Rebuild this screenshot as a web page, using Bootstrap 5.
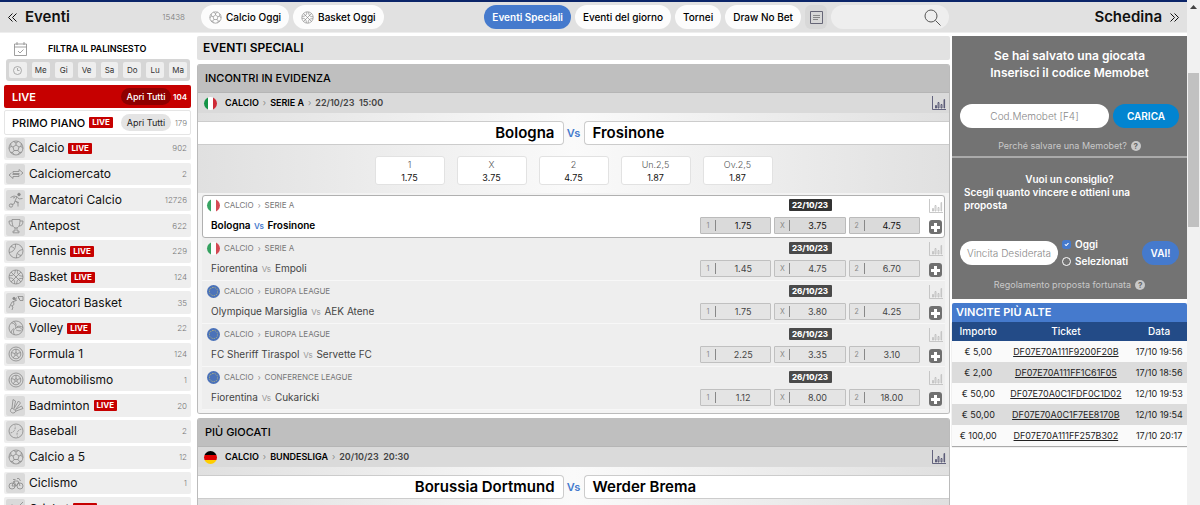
<!DOCTYPE html>
<html lang="it">
<head>
<meta charset="utf-8">
<meta name="viewport" content="width=device-width, initial-scale=1">
<title>Eventi Speciali</title>
<link href="https://cdn.jsdelivr.net/npm/bootstrap@5.3.0/dist/css/bootstrap.min.css" rel="stylesheet">
<style>
:root{--blue:#457acd;--red:#c60000;--side:197px;--slip:236px}
body{font-family:Inter,"Open Sans",sans-serif;font-size:11px;line-height:16px;color:#111;background:#fff}
a{color:inherit;text-decoration:none}
button{font:inherit;color:inherit}
svg{flex:none;fill:none;display:block}
svg:not([stroke]){stroke:currentColor}
.app{height:100vh;overflow:hidden}
.topbar{height:33px;flex:none;background:#e1e1e1;border-top:2px solid #0b2569;border-bottom:1px solid #eee}
.side-col{width:var(--side);flex:none}
.slip-col{width:var(--slip);flex:none}
.bigword{font-size:15px;font-weight:600;line-height:24px}
.chev{width:9px;height:9px;stroke-width:1}
.count{color:#777;font-size:8px;font-weight:300}
.pill{border:0;border-radius:12px;background:#fcfcfc;height:24px;padding:0 8px;font-size:10px;font-weight:500;color:#000;white-space:nowrap}
.pill.on{background:var(--blue);color:#fff;font-weight:600}
.pill svg{width:13px;height:13px;color:#888;stroke-width:.8}
.newsbtn{width:22px;height:24px;border:0;border-radius:6px;background:#d8d8d8;padding:0}
.search{width:118px;height:24px;border-radius:12px;background:#eee;margin-right:2px}
.search input{border:0;background:none;min-width:0;width:80px;outline:0}
.filter{padding:8px 0 2px 10px;gap:21px}
.filter-title{font-size:9px;font-weight:600;color:#000}
.days{background:#d6d6d6;border-radius:3px;padding:3px;gap:5px;margin:0 1px 0 2px}
.days button{flex:1 1 0;height:16px;border:0;border-radius:2px;background:#eee;padding:0;font-size:8px;line-height:16px;color:#333}
.bar{height:23px;border-radius:2px;padding:0 4px 0 8px;font-size:11px;font-weight:600}
.bar.live{background:var(--red);color:#fff;margin-top:4px}
.bar.first{border:1px solid #e5e5e5;color:#000;height:25px;padding:0 3px 0 7px;font-weight:500;margin-top:2px}
.bar .open{border:0;border-radius:9px;height:17px;width:50px;background:#e4e4e4;font-size:9px;font-weight:400;padding:0;line-height:17px;color:#222}
.bar.live .open{background:#8f0000;color:#fff;font-weight:500}
.bar .num{width:16px;text-align:right;font-size:8px}
.livetag{background:var(--red);color:#fff;font-size:8px;font-weight:700;line-height:11px;padding:0 3px;border-radius:1px}
.sports{display:grid;grid-auto-rows:1fr;gap:3px;min-height:383px;margin:2px 0 0;padding:0;list-style:none}
.sports a{background:#eee;border-radius:2px;height:100%;padding:0 4px 0 2px;font-size:12px;font-weight:400;color:#111}
.sports .ico{width:19px;height:20px;background:#dadada;border-radius:2px;color:#888}
.sports .ico svg{width:16px;height:16px;stroke-width:.8}
.main-col{min-width:0;padding:3px 1px 0 0}
.page-title{background:#e2e2e2;border-radius:2px;height:24px;padding:0 6px;font-size:12px;font-weight:600;line-height:24px;color:#000}
.panel{border:1px solid #bbb;border-top:0;border-radius:3px;overflow:hidden;background:linear-gradient(90deg,#e0e0e0,#fafafa 50%,#e0e0e0)}
.panel h2{margin:0 -1px;background:#bfbfbf;height:29px;line-height:29px;padding:0 8px;font-size:11px;font-weight:500;color:#000;border-bottom:1px solid #b5b5b5}
.crumb{height:20px;background:#dadada;padding:0 3px 0 6px;font-size:9px;font-weight:600;color:#000}
.crumb .when{color:#444}
.crumb i,.mini i{font-style:normal;font-weight:300;color:#777}
.flag{width:13px;height:13px;border-radius:50%;flex:none}
.it{background:linear-gradient(90deg,#149447 33%,#fff 33% 67%,#ce2b37 67%)}
.de{background:linear-gradient(#000 33%,#e00000 33% 67%,#ffce00 67%)}
.eu{background:#2f5db0}
.eu::after{content:"";display:block;width:9px;height:9px;margin:2px;border:1px dotted #a9a96b;border-radius:50%}
.versus{display:grid;grid-template-columns:1fr 20px 1fr;margin-top:8px;font-size:15px;font-weight:600;line-height:22px;color:#000}
.versus>span{background:#fff;border:1px solid #ccc;padding:0 8px}
.versus .home{text-align:right;border-left:0;border-radius:0 4px 4px 0}
.versus .away{border-right:0;border-radius:4px 0 0 4px}
.versus b{text-align:center;color:var(--blue);font-size:11px;font-weight:600;line-height:24px}
.quotes{gap:12px;padding:11px 0 8px}
.quotes button{width:70px;height:29px;border:1px solid #e2e2e2;border-radius:3px;background:#fff;font-size:9px;line-height:13px;padding:0;color:#111}
.quotes small{display:block;color:#555;font-size:9px;font-weight:300}
.matches{background:#eeeeee;border:4px solid #f3f3f3;border-top-width:2px;border-bottom-width:3px;margin:0}
.match{height:43px;padding:3px 2px 3px 5px;border-bottom:1px solid #f7f7f7;color:#444}
.match.on{background:#fff;border:1px solid #b0b0b0;border-radius:3px;padding:2px 1px 3px 4px;color:#000}
.mini{font-size:8px;color:#777;line-height:15px}
.match .flag{opacity:.85}
.teams{font-size:10px;line-height:16px;padding-left:4px}
.on .teams{font-weight:600}
.teams span{font-size:8px;color:#999;margin:0 1px}
.on .teams span{color:var(--blue)}
.odds{width:220px;gap:3px}
.odds button{flex:1 1 0;height:17px;border:1px solid #c0c0c0;border-radius:1px;background:#e4e4e4;padding:0;font-size:9px;line-height:15px;color:#444}
.on .odds button{background:#dadada;color:#111;border-color:#bbb}
.odds small{width:15px;border-right:1px solid #888;font-size:7px;line-height:11px;color:#888;text-align:center}
.dateb{background:#4a4a4a;color:#fff;font-size:8px;font-weight:800;line-height:12px;width:43px;text-align:center;border-radius:1px;margin-top:1px}
.on .dateb{background:#333}
.plus{width:13px;height:14px;border:0;border-radius:3px;background:#707070;padding:0}
.tools{width:15px;padding-top:1px}
.chart{width:15px;height:15px;stroke-width:.8}
.slip-col.body-col{padding:3px 0 0 1px}
.slipbox{background:#737373;color:#fff}
.memo{height:122px;padding:11px 8px 0;border-bottom:2px solid #aaa}
.memo p{font-size:12px;font-weight:600;line-height:17px;margin-bottom:23px}
.memo .hint{margin-top:10px}
.slipbox input[type=text]{border:0;border-radius:12px;height:24px;background:#fff;min-width:0;text-align:center;font-size:10px;font-weight:300;padding:0 4px;outline:0;color:#444}
.slipbox input::placeholder{color:#888}
.go{border:0;border-radius:12px;height:24px;background:#0284d0;color:#fff;font-weight:600;font-size:10px;padding:0;width:66px;flex:none}
.go.vai{background:var(--blue);width:37px}
.hint{color:#c9c9c9;font-size:9px;font-weight:400}
.hint b{width:10px;height:10px;border-radius:50%;background:#c9c9c9;color:#666;font-size:8px;line-height:10px;text-align:center}
.tip{height:141px;padding:15px 8px 0;font-size:10px;font-weight:600;line-height:13px}
.tip .wish{width:98px;flex:none}
.tip .form-check-input{width:9px;height:9px;margin:0;background-color:transparent;border-color:#fff;flex:none}
.tip .form-check-input:checked{background-color:var(--blue);border-color:var(--blue)}
.tip label{line-height:17px}
.wins{width:100%;font-size:9px;text-align:center;color:#222;box-shadow:0 1px 1px #aaa}
.wins caption{caption-side:top;background:var(--blue);color:#fff;font-size:11px;font-weight:600;line-height:19px;padding:0 4px;border-radius:2px 2px 0 0}
.wins th{background:#234b87;color:#fff;font-size:10px;font-weight:500;line-height:19px;padding:0}
.wins td{line-height:21px;padding:0;background:#fafafa}
.wins td:first-child,.wins th:first-child{padding-left:4px}
.wins tr:nth-child(even) td{background:#dcdcdc}
.wins a{text-decoration:underline}
.track{width:13px;background:#f1f1f1;flex:none;padding-top:5px;color:#444}
.thumb{width:11px;height:154px;background:#c1c1c1;margin-top:64px}
</style>
</head>
<body>
<svg width="0" height="0" class="position-absolute" aria-hidden="true" stroke="inherit">
<symbol id="ball" viewBox="0 0 16 16"><circle cx="8" cy="8" r="7"/><path d="M8 5l3 2-1 3.500H6L5 7zM8 5V3M11 7l2-.8M10 10.500l1.500 2M6 10.500l-1.500 2M5 7l-2-.8M5.500 1.500L8 3l2.500-1.500M1.200 8.500L3 6.200 2.600 3.600M14.800 8.500L13 6.200l.4-2.600M2.500 12.300l2 .2 1.500 2M13.500 12.300l-2 .2-1.500 2"/></symbol>
<symbol id="basket" viewBox="0 0 16 16"><circle cx="8" cy="8" r="7"/><path d="M3 3l10 10M13 3L3 13M1.300 6.500c4 .5 6-1.500 6-5.500M14.700 9.500c-4-.5-6 1.500-6 5.500M9.500 1.200c-.5 4 1.500 6 5.500 6M6.500 14.800c.5-4-1.500-6-5.500-6"/></symbol>
<symbol id="arrows" viewBox="0 0 16 16"><path d="M5 5.500h6V3.500l4 3.500-2.500 2M11 10.500H5v2L1 9l2.500-2M5 5.500L5 7.500h6.500M11 10.500v-2H4.500"/></symbol>
<symbol id="player" viewBox="0 0 16 16"><circle cx="11" cy="2.500" r="1.300" fill="currentColor"/><path d="M2.500 5.500L6 4l3 .7L7 9l3 2v3.500M9 4.700l2 2.300 3.500-.5M7 9l-1 3-2.500.5M8 9.500l3 1M5 6l2-.5"/><circle cx="3" cy="13.500" r="1.700"/></symbol>
<symbol id="cup" viewBox="0 0 16 16"><path d="M4 1.500h8c0 5-1 8.500-4 8.500S4 6.500 4 1.500zM4 3H1c0 3.500 1.500 5 4 5M12 3h3c0 3.500-1.500 5-4 5M7 10v3H5v1.800h6V13H9v-3"/></symbol>
<symbol id="tennis" viewBox="0 0 16 16"><circle cx="8" cy="8" r="7"/><path d="M1.300 9.500C5 9 8 6 7.500 1M14.700 6.500C11 7 8 10 8.500 15M3 3.500c1.500.3 2.500 1 3.500 2M13 12.500c-1.500-.3-2.500-1-3.500-2"/></symbol>
<symbol id="dunk" viewBox="0 0 16 16"><circle cx="6" cy="3.500" r="1.200" fill="currentColor"/><path d="M10 1.500h5v4h-3zM10 1.500l1.500 3M8.500 2.500L7 6l-3 1-1.500 3L5 12l-1 3M2.500 10L1 13M5.500 6.500L6 9.500 4 11M7 6l2-1"/></symbol>
<symbol id="volley" viewBox="0 0 16 16"><circle cx="8" cy="8" r="7"/><path d="M8 8C8 5 6 3 3.500 2.800M8 8c2.500-1.500 5-.5 6.500 2M8 8c-3 1.500-3 4.500-1.500 6.800M8.300 5.500C8 3.500 7 2 5.500 1.400M9 6.700c2-1 4-.5 6 .8M6 8.500C3.500 10 3 11.500 3.200 13M8.200 10c2 1 3.500 1 5.200.6"/></symbol>
<symbol id="wheel" viewBox="0 0 16 16"><circle cx="8" cy="8" r="7"/><circle cx="8" cy="8" r="4.800"/><circle cx="8" cy="8" r="1.300"/><path d="M8 3.200v3.500M3.500 6.500l3.200 1M12.500 6.500l-3.200 1M5.200 11.900l2-2.800M10.800 11.900l-2-2.800"/></symbol>
<symbol id="shuttle" viewBox="0 0 16 16"><path d="M4 10L5 1.500 7.500 3 6 10.500M6 10.500L10.500 3l2 2-5 6.500M7.500 11.500l6-3.500 1.500 2.500-7 2.500M4 10l4 3c-1 2-3 2.500-4.500 1.500S2 11.500 4 10z"/></symbol>
<symbol id="baseb" viewBox="0 0 16 16"><circle cx="8" cy="8" r="7"/><path d="M2.500 10C6 9.500 8 6 7 2.500M13.500 6C10 6.500 8 10 9.500 13.500" stroke-dasharray="2 1"/></symbol>
<symbol id="bike" viewBox="0 0 16 16"><circle cx="4" cy="11" r="3"/><circle cx="12" cy="11" r="3"/><path d="M4 11l2-5h4l2 5M6 6l2 5h-4M8 11l3-4M5 4.500h2.500M9 3.500h2L12.500 6"/></symbol>
<symbol id="cricket" viewBox="0 0 16 16"><path d="M2 13L11 4l2 2-9 8zM11.500 4.500L15 1"/><circle cx="4" cy="6" r="2"/></symbol>
<symbol id="bars" viewBox="0 0 15 15"><path d="M1.500 0v13.500H15"/><path d="M4.500 12V9.500h1V12zM7 12V6.500h1V12zM10 12V8.500h1V12zM13 12V3.500h.6V12z"/></symbol>
</svg>

<div class="app d-flex">
<div class="flex-grow-1 d-flex flex-column" style="min-width:0">
<header class="topbar d-flex align-items-center">
  <div class="side-col d-flex align-items-center ps-2">
    <svg class="chev" viewBox="0 0 9 9"><path d="M4.500.5l-4 4 4 4M8.500.5l-4 4 4 4"/></svg>
    <span class="bigword ms-2">Eventi</span><span class="count ms-auto me-2 pe-1">15438</span>
  </div>
  <nav class="flex-grow-1 d-flex align-items-center gap-1 ps-1">
    <button class="pill d-flex align-items-center gap-1"><svg><use href="#ball"/></svg>Calcio Oggi</button>
    <button class="pill d-flex align-items-center gap-1"><svg><use href="#basket"/></svg>Basket Oggi</button>
    <button class="pill on ms-auto">Eventi Speciali</button>
    <button class="pill">Eventi del giorno</button>
    <button class="pill">Tornei</button>
    <button class="pill">Draw No Bet</button>
    <button class="newsbtn d-flex align-items-center justify-content-center" aria-label="Notizie"><svg width="13" height="13" viewBox="0 0 13 13"><path stroke="#667" d="M.5.500h12v12H.5z"/><path stroke="#888" d="M3 4.500h7M3 6.500h7M3 8.500h5"/></svg></button>
    <label class="search d-flex align-items-center justify-content-between px-2"><input type="text" aria-label="Cerca"><svg width="17" height="17" viewBox="0 0 17 17" stroke="#555"><circle cx="7" cy="7" r="6"/><path d="M11.500 11.500l5 5"/></svg></label>
  </nav>
  <div class="slip-col d-flex align-items-center justify-content-end gap-2 pe-2"><span class="bigword">Schedina</span><svg class="chev" viewBox="0 0 9 9"><path d="M.5.500l4 4-4 4M4.500.500l4 4-4 4"/></svg></div>
</header>

<div class="d-flex align-items-start">
<aside class="side-col ps-1" style="padding-right:6px">
  <div class="filter d-flex align-items-center">
    <svg width="13" height="14" viewBox="0 0 13 14" stroke="#888" stroke-width=".8"><path d="M.5 2h12v11.500H.5zM.5 5h12M3 0v3M10 0v3M4 9l2 2 3.500-3.500"/></svg>
    <span class="filter-title">FILTRA IL PALINSESTO</span>
  </div>
  <div class="days d-flex">
    <button class="d-flex align-items-center justify-content-center" aria-label="Ora"><svg width="9" height="9" viewBox="0 0 9 9" stroke="#999" stroke-width=".8"><circle cx="4.500" cy="4.500" r="4"/><path d="M4.500 2v2.500h2"/></svg></button>
    <button>Me</button><button>Gi</button><button>Ve</button><button>Sa</button><button>Do</button><button>Lu</button><button>Ma</button>
  </div>
  <div class="bar live d-flex align-items-center">LIVE<button class="open ms-auto">Apri Tutti</button><span class="num">104</span></div>
  <div class="bar first d-flex align-items-center">PRIMO PIANO<span class="livetag ms-1">LIVE</span><button class="open ms-auto">Apri Tutti</button><span class="num count">179</span></div>
  <ul class="sports">
    <li><a href="#" class="d-flex align-items-center gap-1"><span class="ico d-flex align-items-center justify-content-center"><svg><use href="#ball"/></svg></span>Calcio<span class="livetag">LIVE</span><span class="count ms-auto">902</span></a></li>
    <li><a href="#" class="d-flex align-items-center gap-1"><span class="ico d-flex align-items-center justify-content-center"><svg><use href="#arrows"/></svg></span>Calciomercato<span class="count ms-auto">2</span></a></li>
    <li><a href="#" class="d-flex align-items-center gap-1"><span class="ico d-flex align-items-center justify-content-center"><svg><use href="#player"/></svg></span>Marcatori Calcio<span class="count ms-auto">12726</span></a></li>
    <li><a href="#" class="d-flex align-items-center gap-1"><span class="ico d-flex align-items-center justify-content-center"><svg><use href="#cup"/></svg></span>Antepost<span class="count ms-auto">622</span></a></li>
    <li><a href="#" class="d-flex align-items-center gap-1"><span class="ico d-flex align-items-center justify-content-center"><svg><use href="#tennis"/></svg></span>Tennis<span class="livetag">LIVE</span><span class="count ms-auto">229</span></a></li>
    <li><a href="#" class="d-flex align-items-center gap-1"><span class="ico d-flex align-items-center justify-content-center"><svg><use href="#basket"/></svg></span>Basket<span class="livetag">LIVE</span><span class="count ms-auto">124</span></a></li>
    <li><a href="#" class="d-flex align-items-center gap-1"><span class="ico d-flex align-items-center justify-content-center"><svg><use href="#dunk"/></svg></span>Giocatori Basket<span class="count ms-auto">35</span></a></li>
    <li><a href="#" class="d-flex align-items-center gap-1"><span class="ico d-flex align-items-center justify-content-center"><svg><use href="#volley"/></svg></span>Volley<span class="livetag">LIVE</span><span class="count ms-auto">22</span></a></li>
    <li><a href="#" class="d-flex align-items-center gap-1"><span class="ico d-flex align-items-center justify-content-center"><svg><use href="#wheel"/></svg></span>Formula 1<span class="count ms-auto">124</span></a></li>
    <li><a href="#" class="d-flex align-items-center gap-1"><span class="ico d-flex align-items-center justify-content-center"><svg><use href="#wheel"/></svg></span>Automobilismo<span class="count ms-auto">1</span></a></li>
    <li><a href="#" class="d-flex align-items-center gap-1"><span class="ico d-flex align-items-center justify-content-center"><svg><use href="#shuttle"/></svg></span>Badminton<span class="livetag">LIVE</span><span class="count ms-auto">20</span></a></li>
    <li><a href="#" class="d-flex align-items-center gap-1"><span class="ico d-flex align-items-center justify-content-center"><svg><use href="#baseb"/></svg></span>Baseball<span class="count ms-auto">2</span></a></li>
    <li><a href="#" class="d-flex align-items-center gap-1"><span class="ico d-flex align-items-center justify-content-center"><svg><use href="#ball"/></svg></span>Calcio a 5<span class="count ms-auto">12</span></a></li>
    <li><a href="#" class="d-flex align-items-center gap-1"><span class="ico d-flex align-items-center justify-content-center"><svg><use href="#bike"/></svg></span>Ciclismo<span class="count ms-auto">1</span></a></li>
    <li><a href="#" class="d-flex align-items-center gap-1"><span class="ico d-flex align-items-center justify-content-center"><svg><use href="#cricket"/></svg></span>Cricket<span class="livetag">LIVE</span></a></li>
  </ul>
</aside>

<main class="main-col flex-grow-1">
  <h1 class="page-title mb-1">EVENTI SPECIALI</h1>
  <section class="panel mb-1">
    <h2>INCONTRI IN EVIDENZA</h2>
    <div class="crumb d-flex align-items-center gap-1"><span class="flag it me-1"></span>CALCIO<i>›</i>SERIE A<i>›</i><span class="when">22/10/23 &nbsp;15:00</span><svg class="chart ms-auto" stroke="#446"><use href="#bars"/></svg></div>
    <div class="versus"><span class="home">Bologna</span><b>Vs</b><span class="away">Frosinone</span></div>
    <div class="quotes d-flex justify-content-center">
      <button><small>1</small>1.75</button><button><small>X</small>3.75</button><button><small>2</small>4.75</button><button><small>Un.2,5</small>1.87</button><button><small>Ov.2,5</small>1.87</button>
    </div>
    <div class="matches">
      <div class="match on d-flex justify-content-between">
        <div><div class="mini d-flex align-items-center gap-1"><span class="flag it"></span>CALCIO<i>›</i>SERIE A</div><div class="teams mt-1">Bologna <span>Vs</span> Frosinone</div></div>
        <div class="d-flex gap-2"><div class="d-flex flex-column align-items-center justify-content-between"><span class="dateb">22/10/23</span><div class="odds d-flex"><button class="d-flex align-items-center"><small>1</small><span class="flex-grow-1">1.75</span></button><button class="d-flex align-items-center"><small>X</small><span class="flex-grow-1">3.75</span></button><button class="d-flex align-items-center"><small>2</small><span class="flex-grow-1">4.75</span></button></div></div>
        <div class="tools d-flex flex-column align-items-center justify-content-between"><svg class="chart" stroke="#bbb"><use href="#bars"/></svg><button class="plus d-flex align-items-center justify-content-center" aria-label="Altre quote"><svg width="9" height="9" viewBox="0 0 9 9" stroke="#fff" stroke-width="3"><path d="M4.500 0v9M0 4.500h9"/></svg></button></div></div>
      </div>
      <div class="match d-flex justify-content-between">
        <div><div class="mini d-flex align-items-center gap-1"><span class="flag it"></span>CALCIO<i>›</i>SERIE A</div><div class="teams mt-1">Fiorentina <span>Vs</span> Empoli</div></div>
        <div class="d-flex gap-2"><div class="d-flex flex-column align-items-center justify-content-between"><span class="dateb">23/10/23</span><div class="odds d-flex"><button class="d-flex align-items-center"><small>1</small><span class="flex-grow-1">1.45</span></button><button class="d-flex align-items-center"><small>X</small><span class="flex-grow-1">4.75</span></button><button class="d-flex align-items-center"><small>2</small><span class="flex-grow-1">6.70</span></button></div></div>
        <div class="tools d-flex flex-column align-items-center justify-content-between"><svg class="chart" stroke="#bbb"><use href="#bars"/></svg><button class="plus d-flex align-items-center justify-content-center" aria-label="Altre quote"><svg width="9" height="9" viewBox="0 0 9 9" stroke="#fff" stroke-width="3"><path d="M4.500 0v9M0 4.500h9"/></svg></button></div></div>
      </div>
      <div class="match d-flex justify-content-between">
        <div><div class="mini d-flex align-items-center gap-1"><span class="flag eu"></span>CALCIO<i>›</i>EUROPA LEAGUE</div><div class="teams mt-1">Olympique Marsiglia <span>Vs</span> AEK Atene</div></div>
        <div class="d-flex gap-2"><div class="d-flex flex-column align-items-center justify-content-between"><span class="dateb">26/10/23</span><div class="odds d-flex"><button class="d-flex align-items-center"><small>1</small><span class="flex-grow-1">1.75</span></button><button class="d-flex align-items-center"><small>X</small><span class="flex-grow-1">3.80</span></button><button class="d-flex align-items-center"><small>2</small><span class="flex-grow-1">4.25</span></button></div></div>
        <div class="tools d-flex flex-column align-items-center justify-content-between"><svg class="chart" stroke="#bbb"><use href="#bars"/></svg><button class="plus d-flex align-items-center justify-content-center" aria-label="Altre quote"><svg width="9" height="9" viewBox="0 0 9 9" stroke="#fff" stroke-width="3"><path d="M4.500 0v9M0 4.500h9"/></svg></button></div></div>
      </div>
      <div class="match d-flex justify-content-between">
        <div><div class="mini d-flex align-items-center gap-1"><span class="flag eu"></span>CALCIO<i>›</i>EUROPA LEAGUE</div><div class="teams mt-1">FC Sheriff Tiraspol <span>Vs</span> Servette FC</div></div>
        <div class="d-flex gap-2"><div class="d-flex flex-column align-items-center justify-content-between"><span class="dateb">26/10/23</span><div class="odds d-flex"><button class="d-flex align-items-center"><small>1</small><span class="flex-grow-1">2.25</span></button><button class="d-flex align-items-center"><small>X</small><span class="flex-grow-1">3.35</span></button><button class="d-flex align-items-center"><small>2</small><span class="flex-grow-1">3.10</span></button></div></div>
        <div class="tools d-flex flex-column align-items-center justify-content-between"><svg class="chart" stroke="#bbb"><use href="#bars"/></svg><button class="plus d-flex align-items-center justify-content-center" aria-label="Altre quote"><svg width="9" height="9" viewBox="0 0 9 9" stroke="#fff" stroke-width="3"><path d="M4.500 0v9M0 4.500h9"/></svg></button></div></div>
      </div>
      <div class="match d-flex justify-content-between">
        <div><div class="mini d-flex align-items-center gap-1"><span class="flag eu"></span>CALCIO<i>›</i>CONFERENCE LEAGUE</div><div class="teams mt-1">Fiorentina <span>Vs</span> Cukaricki</div></div>
        <div class="d-flex gap-2"><div class="d-flex flex-column align-items-center justify-content-between"><span class="dateb">26/10/23</span><div class="odds d-flex"><button class="d-flex align-items-center"><small>1</small><span class="flex-grow-1">1.12</span></button><button class="d-flex align-items-center"><small>X</small><span class="flex-grow-1">8.00</span></button><button class="d-flex align-items-center"><small>2</small><span class="flex-grow-1">18.00</span></button></div></div>
        <div class="tools d-flex flex-column align-items-center justify-content-between"><svg class="chart" stroke="#bbb"><use href="#bars"/></svg><button class="plus d-flex align-items-center justify-content-center" aria-label="Altre quote"><svg width="9" height="9" viewBox="0 0 9 9" stroke="#fff" stroke-width="3"><path d="M4.500 0v9M0 4.500h9"/></svg></button></div></div>
      </div>
    </div>
  </section>
  <section class="panel">
    <h2>PIÙ GIOCATI</h2>
    <div class="crumb d-flex align-items-center gap-1"><span class="flag de me-1"></span>CALCIO<i>›</i>BUNDESLIGA<i>›</i><span class="when">20/10/23 &nbsp;20:30</span><svg class="chart ms-auto" stroke="#446"><use href="#bars"/></svg></div>
    <div class="versus mb-3"><span class="home">Borussia Dortmund</span><b>Vs</b><span class="away">Werder Brema</span></div>
  </section>
</main>

<aside class="slip-col body-col">
  <div class="slipbox">
    <div class="memo text-center">
      <p>Se hai salvato una giocata<br>Inserisci il codice Memobet</p>
      <div class="d-flex gap-1"><input type="text" class="flex-grow-1" placeholder="Cod.Memobet [F4]" aria-label="Codice Memobet"><button class="go">CARICA</button></div>
      <div class="hint d-flex justify-content-center align-items-center gap-1">Perché salvare una Memobet? <b>?</b></div>
    </div>
    <div class="tip">
      <div class="text-center">Vuoi un consiglio?</div>
      <div class="ps-1 pe-5 mb-4">Scegli quanto vincere e ottieni una proposta</div>
      <div class="d-flex align-items-center gap-1">
        <input type="text" class="wish" placeholder="Vincita Desiderata" aria-label="Vincita Desiderata">
        <div>
          <div class="d-flex align-items-center gap-1"><input class="form-check-input" type="checkbox" id="oggi" checked><label for="oggi">Oggi</label></div>
          <div class="d-flex align-items-center gap-1"><input class="form-check-input" type="radio" id="sel"><label for="sel">Selezionati</label></div>
        </div>
        <button class="go vai ms-auto">VAI!</button>
      </div>
      <div class="hint d-flex justify-content-center align-items-center gap-1 mt-2">Regolamento proposta fortunata <b>?</b></div>
    </div>
  </div>
  <table class="wins mt-1">
    <caption>VINCITE PIÙ ALTE</caption>
    <thead><tr><th>Importo</th><th>Ticket</th><th>Data</th></tr></thead>
    <tbody>
      <tr><td>€ 5,00</td><td><a href="#">DF07E70A111F9200F20B</a></td><td>17/10 19:56</td></tr>
      <tr><td>€ 2,00</td><td><a href="#">DF07E70A111FF1C61F05</a></td><td>17/10 18:56</td></tr>
      <tr><td>€ 50,00</td><td><a href="#">DF07E70A0C1FDF0C1D02</a></td><td>12/10 19:53</td></tr>
      <tr><td>€ 50,00</td><td><a href="#">DF07E70A0C1F7EE8170B</a></td><td>12/10 19:54</td></tr>
      <tr><td>€ 100,00</td><td><a href="#">DF07E70A111FF257B302</a></td><td>17/10 20:17</td></tr>
    </tbody>
  </table>
</aside>
</div>
</div>
<div class="track d-flex flex-column align-items-center"><svg width="7" height="4" viewBox="0 0 7 4"><path d="M0 4l3.500-4L7 4z" fill="currentColor" stroke="none"/></svg><div class="thumb"></div></div>
</div>
<script src="https://cdn.jsdelivr.net/npm/bootstrap@5.3.0/dist/js/bootstrap.bundle.min.js"></script>
</body>
</html>
